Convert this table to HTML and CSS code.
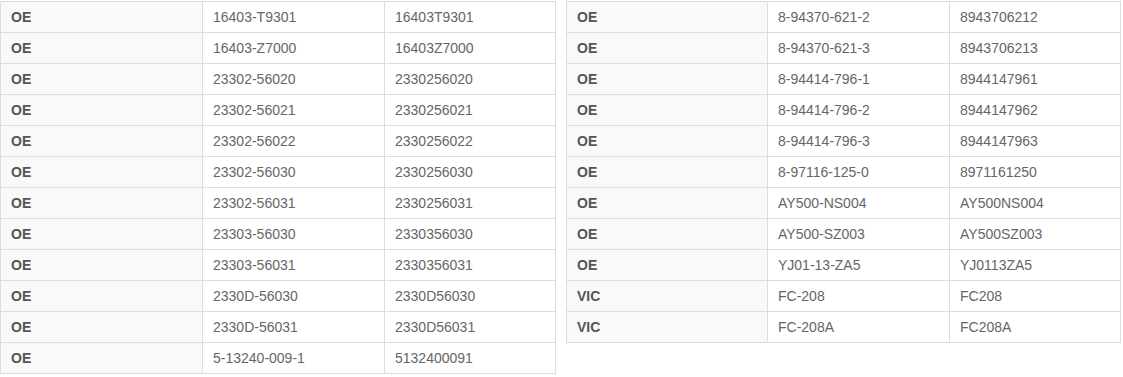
FILE: index.html
```html
<!DOCTYPE html>
<html>
<head>
<meta charset="utf-8">
<link rel="stylesheet" href="styles.css">
</head>
<body>
<div class="wrap">
  <table class="parts parts-left">
    <colgroup><col class="c1"><col class="c2"><col class="c3"></colgroup>
    <tbody>
      <tr><th>OE</th><td>16403-T9301</td><td>16403T9301</td></tr>
      <tr><th>OE</th><td>16403-Z7000</td><td>16403Z7000</td></tr>
      <tr><th>OE</th><td>23302-56020</td><td>2330256020</td></tr>
      <tr><th>OE</th><td>23302-56021</td><td>2330256021</td></tr>
      <tr><th>OE</th><td>23302-56022</td><td>2330256022</td></tr>
      <tr><th>OE</th><td>23302-56030</td><td>2330256030</td></tr>
      <tr><th>OE</th><td>23302-56031</td><td>2330256031</td></tr>
      <tr><th>OE</th><td>23303-56030</td><td>2330356030</td></tr>
      <tr><th>OE</th><td>23303-56031</td><td>2330356031</td></tr>
      <tr><th>OE</th><td>2330D-56030</td><td>2330D56030</td></tr>
      <tr><th>OE</th><td>2330D-56031</td><td>2330D56031</td></tr>
      <tr><th>OE</th><td>5-13240-009-1</td><td>5132400091</td></tr>
    </tbody>
  </table>
  <table class="parts parts-right">
    <colgroup><col class="c1r"><col class="c2"><col class="c3"></colgroup>
    <tbody>
      <tr><th>OE</th><td>8-94370-621-2</td><td>8943706212</td></tr>
      <tr><th>OE</th><td>8-94370-621-3</td><td>8943706213</td></tr>
      <tr><th>OE</th><td>8-94414-796-1</td><td>8944147961</td></tr>
      <tr><th>OE</th><td>8-94414-796-2</td><td>8944147962</td></tr>
      <tr><th>OE</th><td>8-94414-796-3</td><td>8944147963</td></tr>
      <tr><th>OE</th><td>8-97116-125-0</td><td>8971161250</td></tr>
      <tr><th>OE</th><td>AY500-NS004</td><td>AY500NS004</td></tr>
      <tr><th>OE</th><td>AY500-SZ003</td><td>AY500SZ003</td></tr>
      <tr><th>OE</th><td>YJ01-13-ZA5</td><td>YJ0113ZA5</td></tr>
      <tr><th>VIC</th><td>FC-208</td><td>FC208</td></tr>
      <tr><th>VIC</th><td>FC-208A</td><td>FC208A</td></tr>
    </tbody>
  </table>
</div>
</body>
</html>
```

FILE: styles.css
```css
html, body {
  margin: 0;
  padding: 0;
  background: #fff;
}
body {
  font-family: "Liberation Sans", Arial, sans-serif;
  font-size: 14px;
  color: #666;
}
.wrap {
  display: flex;
  align-items: flex-start;
  gap: 10px;
  padding-top: 1px;
}
.parts {
  border-collapse: collapse;
  table-layout: fixed;
}
.parts-left { width: 556px; }
.parts-right { width: 555px; }
.c1 { width: 202px; }
.c1r { width: 201px; }
.c2 { width: 182px; }
.c3 { width: 171px; }
.parts th,
.parts td {
  border: 1px solid #ddd;
  padding: 5px 10px;
  line-height: 20px;
  text-align: left;
  vertical-align: top;
  white-space: nowrap;
}
.parts th {
  background: #f9f9f9;
  font-weight: bold;
  color: #555;
}
.parts td {
  font-weight: normal;
  color: #666;
}
```
